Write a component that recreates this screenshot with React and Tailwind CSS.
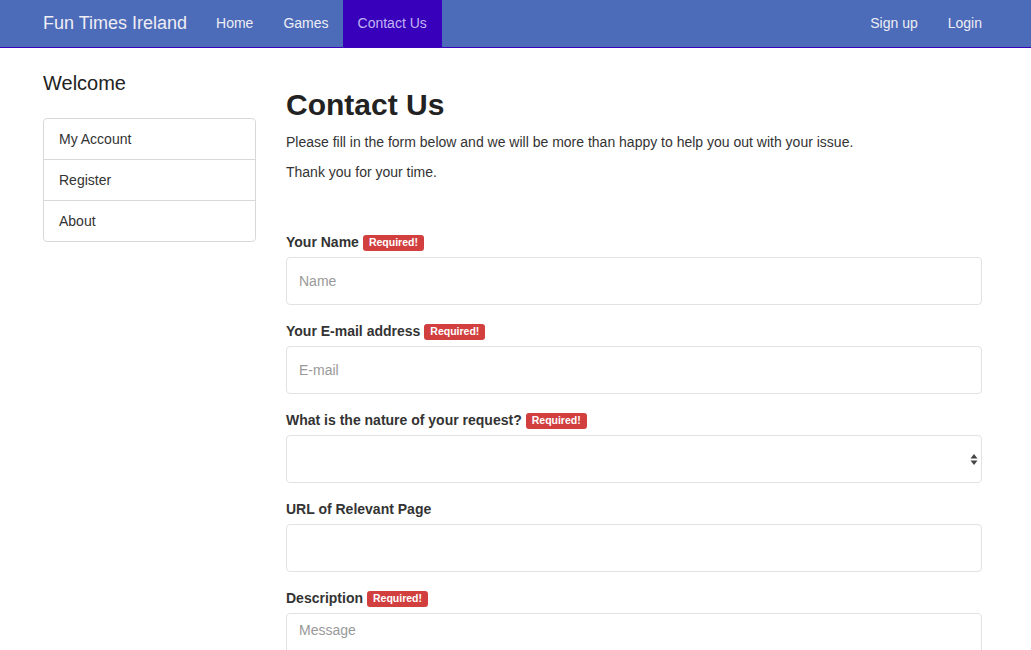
import React from 'react';

const font = { fontFamily: '"Liberation Sans", Arial, sans-serif' };

const Badge = () => (
  <span className="ml-1 inline-block rounded-[3px] bg-[#d13f3f] px-[6px] pt-[2px] pb-[3px] align-[1px] text-[10.5px] leading-none font-bold text-white">
    Required!
  </span>
);

const Field = ({ label, required, children }) => (
  <div className="mb-[16px]">
    <label className="mb-[5px] block text-[14px] leading-[20px] font-bold text-[#333]">
      {label}
      {required && <Badge />}
    </label>
    {children}
  </div>
);

const inputCls =
  'block h-[48px] w-full rounded-[4px] border border-[#e2e2e2] bg-white px-[12px] text-[14px] text-[#555] placeholder-[#999] outline-none';

const App = () => {
  return (
    <div className="min-h-[650px] bg-white text-[#333]" style={font}>
      <nav className="h-[48px] border-b border-[#3a00bb] bg-[#4c6bb9]">
        <div className="flex h-[47px] items-stretch pl-[43px] pr-[49px]">
          <a className="flex items-center pr-[14px] text-[18px] text-[#eeeef4]">Fun Times Ireland</a>
          <a className="flex items-center px-[15px] text-[14px] text-[#eeeef4]">Home</a>
          <a className="flex items-center pl-[15px] pr-[14px] text-[14px] text-[#eeeef4]">Games</a>
          <a className="flex items-center bg-[#3800bb] px-[15px] text-[14px] text-[#c1b5f2]">Contact Us</a>
          <div className="flex-1" />
          <a className="flex items-center px-[15px] text-[14px] text-[#eeeef4]">Sign up</a>
          <a className="flex items-center pl-[15px] text-[14px] text-[#eeeef4]">Login</a>
        </div>
      </nav>

      <div className="flex gap-[30px] pl-[43px] pr-[49px]">
        <aside className="w-[213px] shrink-0">
          <h4 className="mt-[23px] mb-[23px] text-[20px] leading-[24px] text-[#222]">Welcome</h4>
          <div className="rounded-[4px] border border-[#d8d8d8]">
            <div className="h-[40px] px-[15px] text-[14px] leading-[40px] text-[#333]">My Account</div>
            <div className="h-[41px] border-t border-[#d8d8d8] px-[15px] text-[14px] leading-[40px] text-[#333]">Register</div>
            <div className="h-[41px] border-t border-[#d8d8d8] px-[15px] text-[14px] leading-[40px] text-[#333]">About</div>
          </div>
        </aside>

        <main className="flex-1">
          <h1 className="mt-[39px] mb-[9px] text-[30px] leading-[36px] font-bold text-[#222]">Contact Us</h1>
          <p className="mb-[10px] text-[14px] leading-[20px]">
            Please fill in the form below and we will be more than happy to help you out with your issue.
          </p>
          <p className="mb-[50px] text-[14px] leading-[20px]">Thank you for your time.</p>

          <Field label="Your Name" required>
            <input className={inputCls} placeholder="Name" />
          </Field>
          <Field label="Your E-mail address" required>
            <input className={inputCls} placeholder="E-mail" />
          </Field>
          <Field label="What is the nature of your request?" required>
            <div className="relative">
              <div className={inputCls} />
              <svg className="absolute top-[19px] right-[4px]" width="8" height="11" viewBox="0 0 8 11">
                <path d="M4 0 L7.5 4.5 H0.5 Z" fill="#444" />
                <path d="M4 11 L7.5 6.5 H0.5 Z" fill="#444" />
              </svg>
            </div>
          </Field>
          <Field label="URL of Relevant Page">
            <input className={inputCls} />
          </Field>
          <Field label="Description" required>
            <textarea
              className="block h-[120px] w-full resize-none rounded-[4px] border border-[#e2e2e2] px-[12px] pt-[6px] text-[14px] leading-[20px] placeholder-[#999] outline-none"
              placeholder="Message"
            />
          </Field>
        </main>
      </div>
    </div>
  );
};

export default App;
